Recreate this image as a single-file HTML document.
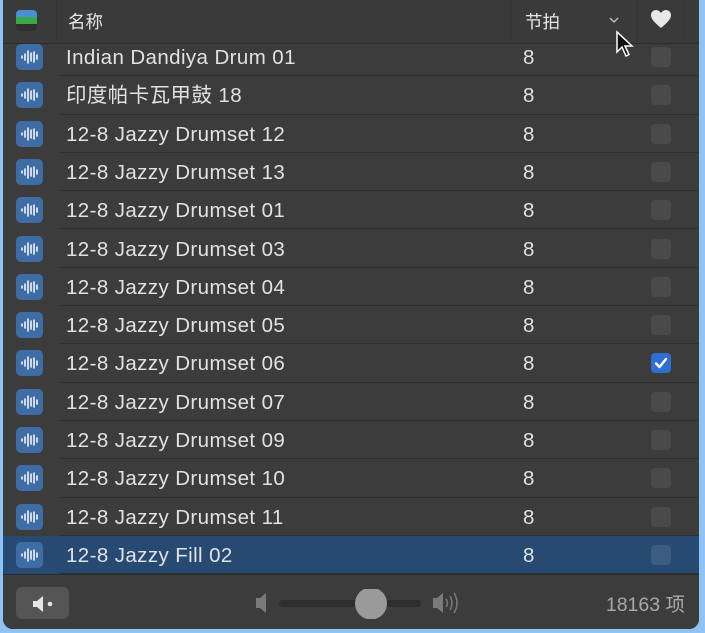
<!DOCTYPE html>
<html><head><meta charset="utf-8"><style>
*{margin:0;padding:0;box-sizing:border-box}
body{width:705px;height:633px;background:#8ec3f3;overflow:hidden;position:relative;font-family:"Liberation Sans","Noto Sans CJK SC",sans-serif}
.win{position:absolute;left:3px;top:0;width:696px;height:629px;background:#3c3c3c;border-radius:0 0 10px 10px;overflow:hidden}
.row{position:absolute;left:0;width:696px;height:38.3px;border-bottom:1px solid #2f2f2f}
.row .sep{position:absolute;left:0;bottom:-1px;width:57px;height:1px;background:#3c3c3c}
.ic{position:absolute;left:13px;top:6px;width:27px;height:26px;background:#3d6da4;border-radius:5px}
.ic svg{position:absolute;left:0;top:0}
.nm{position:absolute;left:63px;top:9px;font-size:20.5px;line-height:22px;height:22px;color:#e2e2e2;letter-spacing:.4px;white-space:nowrap}
.bt{position:absolute;left:520px;top:9px;font-size:20.5px;line-height:22px;color:#e2e2e2}
.cb{position:absolute;left:648px;top:9px;width:20px;height:20px;border-radius:4px;background:#4a4a4a}
.sel{background:#274a72}
.sel .sep{background:#274a72}
.sel .cb{background:#3c5d82}
.hdr{position:absolute;left:0;top:0;width:696px;height:44px;background:#3a3a3a;border-bottom:1px solid #2c2c2c}
.hdr .t{position:absolute;top:9px;font-size:17.5px;color:#e6e6e6}
.vs{position:absolute;top:0;width:1px;height:44px;background:#343434}
.foot{position:absolute;left:0;top:574px;width:696px;height:55px;background:#3c3c3c;border-top:1px solid #2a2a2a}
</style></head><body>
<div class="win">
<div id="rows"></div>
<div class="hdr">
 <div style="position:absolute;left:13px;top:10px;width:21px;height:21px;border-radius:4px;overflow:hidden;background:#2f2f2f">
  <div style="height:7px;background:#4a8fd6"></div><div style="height:7px;background:#3aa64a"></div></div>
 <div class="vs" style="left:53px"></div>
 <div class="t" style="left:65px">名称</div>
 <div class="vs" style="left:507px"></div>
 <div class="t" style="left:522px">节拍</div>
 <svg style="position:absolute;left:605px;top:16px" width="12" height="8"><path d="M2 2 L6 6 L10 2" stroke="#bbb" stroke-width="1.5" fill="none"/></svg>
 <div class="vs" style="left:634px"></div>
 <svg style="position:absolute;left:647px;top:9px" width="22" height="20" viewBox="0 0 22 20"><path d="M11 19 C4 13 1 10 1 6 C1 3 3.5 1 6 1 C8 1 10 2.5 11 4 C12 2.5 14 1 16 1 C18.5 1 21 3 21 6 C21 10 18 13 11 19Z" fill="#e8e8e8"/></svg>
 <div class="vs" style="left:681px"></div>
</div>
<div class="foot">
 <div style="position:absolute;left:13px;top:12px;width:53px;height:32px;border-radius:6px;background:#555"></div>
 <svg style="position:absolute;left:28px;top:20px" width="26" height="18"><path d="M2 6 H6 L12 1 V17 L6 12 H2Z" fill="#e6e6e6"/><circle cx="19" cy="9" r="2.3" fill="#e6e6e6"/></svg>
 <svg style="position:absolute;left:250px;top:14px" width="215" height="30"><path d="M3 9 H7 L13 4 V24 L7 19 H3Z" fill="#7a7a7a"/><rect x="26" y="11" width="142" height="7" rx="3.5" fill="#2e2e2e"/><circle cx="118" cy="14.5" r="16" fill="#9a9a9a"/><path d="M180 9 H184 L190 4 V24 L184 19 H180Z" fill="#7a7a7a"/><path d="M193 10 Q196 14 193 18 M197 7 Q201 14 197 21 M201 4 Q207 14 201 24" stroke="#7a7a7a" stroke-width="1.5" fill="none"/></svg>
 <div style="position:absolute;right:14px;top:19px;font-size:19.5px;line-height:22px;color:#a8a8a8">18163 项</div>
</div>
<svg style="position:absolute;left:612px;top:30px" width="22" height="30"><path d="M2 2 L2 22 L7 17 L11 26 L14 24.5 L10 16 L17 16 Z" fill="#111" stroke="#fff" stroke-width="1.5"/></svg>
</div>
<script>
var names=["Indian Dandiya Drum 01","印度帕卡瓦甲鼓 18","12-8 Jazzy Drumset 12","12-8 Jazzy Drumset 13","12-8 Jazzy Drumset 01","12-8 Jazzy Drumset 03","12-8 Jazzy Drumset 04","12-8 Jazzy Drumset 05","12-8 Jazzy Drumset 06","12-8 Jazzy Drumset 07","12-8 Jazzy Drumset 09","12-8 Jazzy Drumset 10","12-8 Jazzy Drumset 11","12-8 Jazzy Fill 02"];
var wave='<svg width="27" height="26"><g stroke="#fff" stroke-width="1.5" stroke-linecap="round"><path d="M6 12v2M9 10v6M12 7v12M15 9v8M18 8v10M21 11v4"/></g></svg>';
var h="";
for(var i=0;i<names.length;i++){
 var cls="row"+(i==13?" sel":"");
 var cb=i==8?'<div class="cb" style="background:#2f6fd0"><svg width="20" height="20"><path d="M5 10.5 L8.5 14 L15 6" stroke="#fff" stroke-width="2.4" fill="none" stroke-linecap="round" stroke-linejoin="round"/></svg></div>':'<div class="cb"></div>';
 h+='<div class="'+cls+'" style="top:'+(38+38.3*i)+'px"><div class="sep"></div><div class="ic">'+wave+'</div><div class="nm">'+names[i]+'</div><div class="bt">8</div>'+cb+'</div>';
}
document.getElementById("rows").innerHTML=h;
</script>
</body></html>
